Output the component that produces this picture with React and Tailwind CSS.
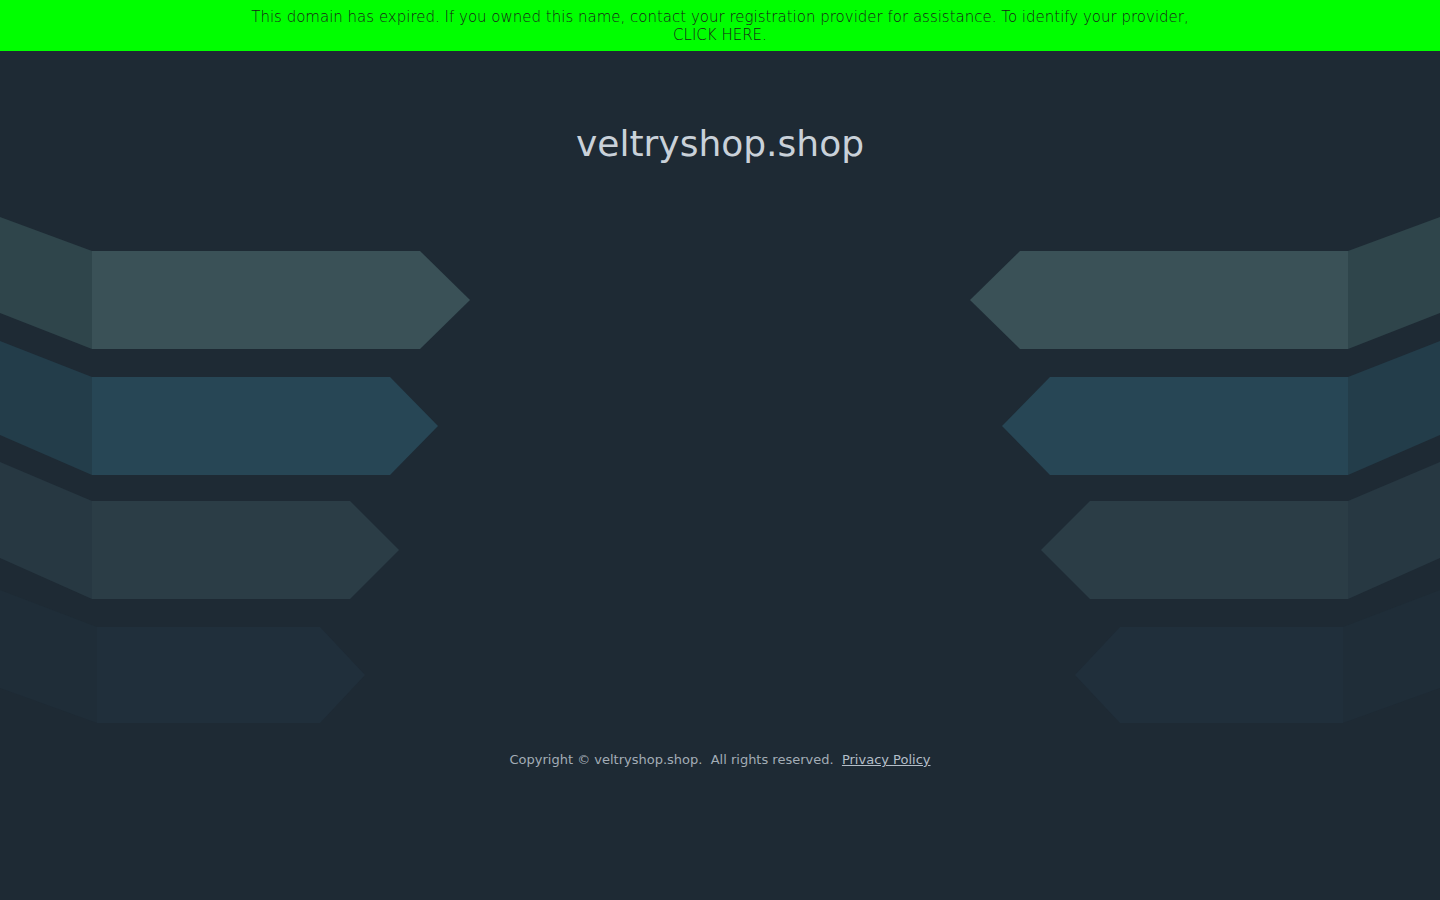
import React from 'react';

const rows = [
  { main: '#3a5157', side: '#2f454b', top: 51, bottom: 149, end: 420, tip: 470, start: 92, sTop: 17, sBot: 113 },
  { main: '#274655', side: '#233d4a', top: 177, bottom: 275, end: 390, tip: 438, start: 92, sTop: 141, sBot: 235 },
  { main: '#2b3d46', side: '#273842', top: 301, bottom: 399, end: 350, tip: 399, start: 92, sTop: 262, sBot: 358 },
  { main: '#202f3b', side: '#1f2d38', top: 427, bottom: 523, end: 320, tip: 365, start: 97, sTop: 390, sBot: 488 },
];

function Arrows({ flip }) {
  return (
    <svg width="470" height="540" viewBox="0 0 470 540" className="block shrink-0">
      <g transform={flip ? 'translate(470 0) scale(-1 1)' : undefined}>
        {rows.map((r, i) => {
          const mid = (r.top + r.bottom) / 2;
          return (
            <g key={i}>
              <polygon points={`0,${r.sTop} ${r.start},${r.top} ${r.start},${r.bottom} 0,${r.sBot}`} fill={r.side} />
              <polygon
                points={`${r.start},${r.top} ${r.end},${r.top} ${r.tip},${mid} ${r.end},${r.bottom} ${r.start},${r.bottom}`}
                fill={r.main}
              />
            </g>
          );
        })}
      </g>
    </svg>
  );
}

export default function App() {
  return (
    <div className="min-h-[900px] w-full bg-[#1e2a34] font-['DejaVu_Sans',sans-serif]">
      <div className="h-[51px] bg-[#00ff00] pt-[8px] text-center text-[15px] leading-[18px] font-light text-[#1a1a1a]">
        <p>This domain has expired. If you owned this name, contact your registration provider for assistance. To identify your provider,</p>
        <p>CLICK HERE.</p>
      </div>

      <h1 className="pt-[72px] text-center text-[36px] leading-[42px] text-[#c9d1d9]">veltryshop.shop</h1>

      <div className="mt-[35px] flex justify-between">
        <Arrows />
        <Arrows flip />
      </div>

      <p className="mt-[11px] text-center text-[13px] leading-[18px] text-[#a3adb6]">
        Copyright © veltryshop.shop.&nbsp; All rights reserved.&nbsp;{' '}
        <a href="#" className="text-[#b4bec8] underline">Privacy Policy</a>
      </p>
    </div>
  );
}
